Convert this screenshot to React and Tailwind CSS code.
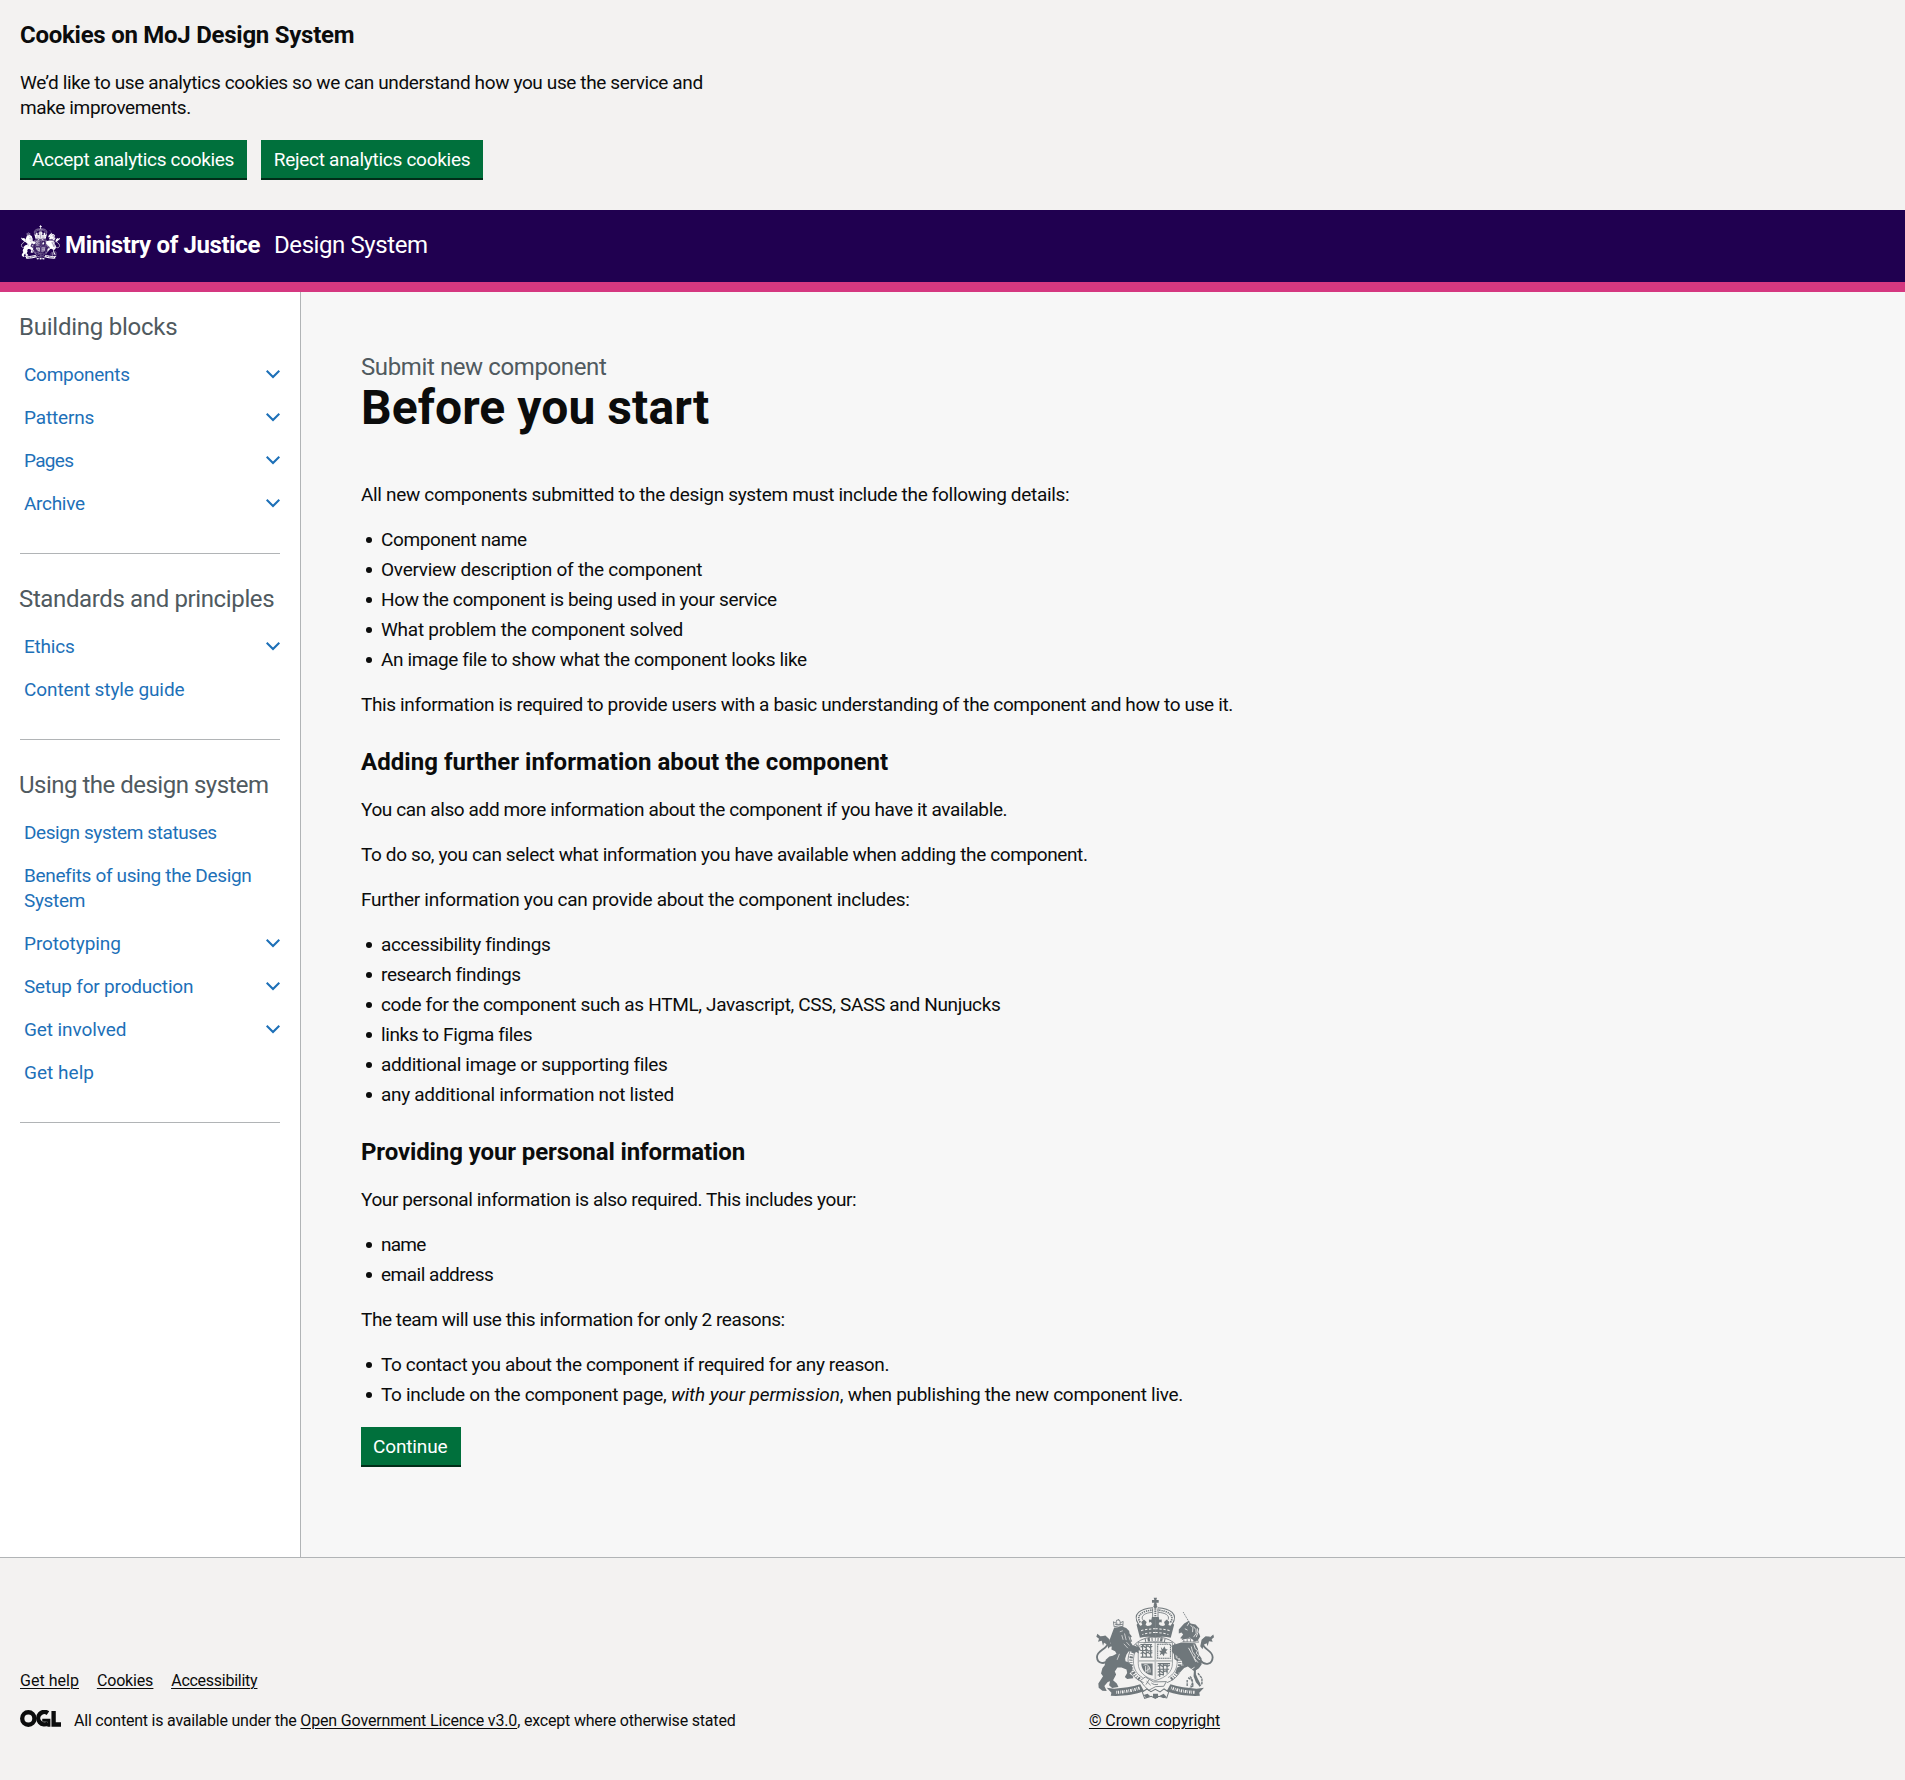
import React from "react";

const link = "text-[#1d70b8]";

const navGroups = [
  {
    title: "Building blocks",
    titleClass: "-ml-px tracking-[-0.24px]",
    items: [
      { label: "Components", open: true, cls: "tracking-[-0.261px]" },
      { label: "Patterns", open: true, cls: "tracking-[-0.165px]" },
      { label: "Pages", open: true, cls: "tracking-[-0.7px]" },
      { label: "Archive", open: true, cls: "tracking-[-0.3px]" },
    ],
  },
  {
    title: "Standards and principles",
    titleClass: "-ml-px tracking-[-0.37px]",
    items: [
      { label: "Ethics", open: true, cls: "tracking-[-0.209px]" },
      { label: "Content style guide", cls: "tracking-[-0.1px]" },
    ],
  },
  {
    title: "Using the design system",
    titleClass: "-ml-px tracking-[-0.5px]",
    items: [
      { label: "Design system statuses", cls: "tracking-[-0.416px]" },
      { label: "Benefits of using the Design System", cls: "tracking-[-0.34px]" },
      { label: "Prototyping", open: true, cls: "tracking-[-0.07px]" },
      { label: "Setup for production", open: true, cls: "tracking-[-0.19px]" },
      { label: "Get involved", open: true, cls: "tracking-[-0.1px]" },
      { label: "Get help", cls: "tracking-[0.03px]" },
    ],
  },
];

function Chevron() {
  return (
    <svg className="mt-[7.5px] h-[9px] w-3.5 shrink-0" viewBox="0 0 14 9" fill="none" stroke="#1d70b8" strokeWidth="2.1">
      <path d="M0.7 0.8 7 7 13.3 0.8" />
    </svg>
  );
}

/* Left half of the crown; the right half is its mirror image. */
function CrownHalf({ knock }) {
  return (
    <>
      <path d="M206 132C188 104 212 86 250 84" strokeWidth="3" />
      <path d="M212 128C198 108 218 93 250 91" strokeWidth="5" strokeDasharray="4 2.5" />
      <path d="M219 120C213 107 228 99 248 98" strokeWidth="2.5" />
      <path d="M249 86v32" strokeWidth="2.5" />
      <path
        d="M257.5 173Q232 168 211 174L201 135 206 130 212 138 218 136 215 127 223 119 231 127 228 136 234 139 242 137 247 133 244 127 238 128V119L245 120 247 112H257.5z"
        fill="currentColor"
        stroke="none"
      />
      <path d="M257 147q-22 0-44 6M257 158q-20 0-39 6" stroke={knock} strokeWidth="3" strokeDasharray="7 5" />
    </>
  );
}

/* Royal coat of arms, drawn in the current text colour. */
function Crest({ className, knock }) {
  return (
    <svg className={className} viewBox="80 52 352 308" fill="none" stroke="currentColor" preserveAspectRatio="none">
      {/* orb and cross */}
      <path d="M252 54h10l-2 7h7v8h-7l2 7h-10l2-7h-7v-8h7z" fill="currentColor" stroke="none" />
      <circle cx="257" cy="80" r="5.5" fill="currentColor" stroke="none" />
      <CrownHalf knock={knock} />
      <g transform="matrix(-1 0 0 1 514 0)">
        <CrownHalf knock={knock} />
      </g>
      <path d="M257 86v34" strokeWidth="6" strokeDasharray="4 2.5" />
      {/* garter */}
      <path d="M226 176c-35 11-54 42-50 75 3 28 20 47 46 57M288 176c35 11 54 42 50 75-3 28-20 47-46 57M226 176c20-6 42-6 62 0" strokeWidth="2.5" />
      <path d="M214 194c-18 14-24 35-22 57 2 19 11 33 27 42M300 194c18 14 24 35 22 57-2 19-11 33-27 42M222 190c22-6 48-6 70 0" strokeWidth="2" />
      <path d="M226 182q31-8 64 1" strokeWidth="10" strokeDasharray="3 5 7 5 3 7 2 6" />
      <path d="M203 196c-18 19-22 45-17 68 4 14 11 23 24 34M311 196c18 19 22 45 17 68-4 14-11 23-24 34" strokeWidth="10" strokeDasharray="3 5 2 4 6 4" />
      {/* shield */}
      <path d="M206 188h102v63c0 25-20 42-51 51-31-9-51-26-51-51z" strokeWidth="2" />
      <path d="M257 189v109M208 243h98" strokeWidth="5" opacity=".4" />
      <path d="M213 194h34M213 202l8-4 6 5 8-5 6 5 7-4M212 212h14l4-4 6 5h12M213 221l8-4 6 5 8-5 6 5 7-4M213 232h35M219 193v39M230 193v41M243 193v39" strokeWidth="3.6" />
      <path d="M264 193h38v42h-38z" strokeWidth="3" strokeDasharray="5 1.5" />
      <path d="M273 201l6 7 5-9 4 9 6 0-6 7 5 7-8-2-3 9-5-7-7 5 3-9-5-5h8z" fill="currentColor" stroke="none" />
      <path d="M215 251h34v36c-20-3-33-16-34-36z" fill="currentColor" stroke="none" />
      <path d="M222 256c12-6 21 4 19 22M228 258v16M235 259v20M241 264l-14 12" stroke={knock} strokeWidth="2.5" />
      <path d="M264 251h37M264 259l8-4 6 5 8-5 6 5 8-4M264 268h34M264 277l8-4 6 5 8-5 8 2M264 286l8-3 10 2M270 249v42M281 249v38M292 249v32" strokeWidth="3.6" />
      {/* garter buckle */}
      <path d="M212 302l15-11 25 15 38-1-8 14-24 1-21 11-13-13zM231 304l12 12M245 309c6 5 12 6 20 4M238 300l-9 14" strokeWidth="2.5" />
      {/* lion */}
      <path d="M134 141l-2-15 7 4 3-9h8l3 8 8-4-1 16q-13-5-26 0zM147 121v-3M137 134h23M142 128v8M152 128v8" strokeWidth="2.5" />
      <path
        d="M134 144l24-4 12 5 9 9 1 7 7 9-4 4 5 11-5 1 6 10 21 6 4 10-8 0 2 9-9-5-5 6-9-8-8 1-6 9-4 12 1 8 10 4 9 8 2 14-9 11 10 8 1 6-18 2-7-6 7-12-2-10-15-6-12 0-8 12 4 9-9 17 11 10 5 10-19 3-9-8 3-12-7 2-10 12 7 15-13-1-11-9-1-12 14-22-6-8 4-16 7-9 3-16 11-10 10-2 11-6-4-8-11-5 1-9-6 1-5-5 8-6-5-6z"
        fill="currentColor"
        stroke="none"
      />
      <path d="M151 156l9-3M157 166l4 14M165 161l5 20M171 187l9 10M163 192l12 13M178 170l4 12M150 222l-7 18" stroke={knock} strokeWidth="2" />
      <path d="M122 238c-16 18-38 13-39-6-1-21 30-22 32-42 0-12-9-18-22-17" strokeWidth="5.5" />
      <path d="M84 162l10 8 14-3 12 11 4 19-7 10-4-13-9-5-3 9-4-15-11 3 3-9-8-6z" fill="currentColor" stroke="none" />
      {/* unicorn */}
      <path d="M340 97l20 34" strokeWidth="2.5" strokeDasharray="4 2" />
      <path
        d="M327 149l16-18 14-8 5 8 15 3 11 12-2 11 5 13-6 10-10 6-7-7-8-6-17 5-12-3 9-11-5-6-8 3z"
        fill="currentColor"
        stroke="none"
      />
      <path d="M370 140l8 9 1 12-8 11M362 136l7 8-1 13M345 147l8 4M358 128l-6 10M382 146l2 12-5 14" stroke={knock} strokeWidth="2.5" />
      <path d="M336 180l8-4 26-1 16 9M338 186l49 1M342 180v6M352 178v8M362 178v8M372 179v8" strokeWidth="2.5" />
      <path
        d="M308 196l26-8 42 2 8 17 3 17 8 12 0 18-8 11-9 6 0 12 5 12 8 16-2 9-11-13-7-18 1-16-18-13-11 4-10 11-9 4-6-4 3-11 11-6 9-1-4-12-12-15-14-9-5-7z"
        fill="currentColor"
        stroke="none"
      />
      <path d="M332 208l-18 4 2 24 9 6M330 216l-6 3 2 14" strokeWidth="5" />
      <path d="M372 194l4 13 7 5-4 8 8 7-5 7 8 6M364 200l4 16 8 10-2 10 10 12M356 204l10 18 12 24M374 262l-12 8" stroke={knock} strokeWidth="2.5" />
      <path d="M384 280l12 15 0 16-8 8M355 293l11 8 4 16-10 7M360 290c10 8 10 22 2 30M352 300v20" strokeWidth="4" strokeDasharray="8 2" />
      <path d="M390 240c16 20 37 13 38-8 0-21-28-22-30-42 0-12 9-18 21-17" strokeWidth="5.5" />
      <path d="M430 164l-10 8-13-3-12 11-4 19 7 9 3-13 9-5 3 9 4-15 11 2-3-8 7-6z" fill="currentColor" stroke="none" />
      {/* ribbon and motto */}
      <path d="M112 323l22 3c27-2 54-5 78-13l11 20c-23 11-55 14-84 15l-15-1 2-9zM402 323l-22 3c-27-2-54-5-78-13l-11 20c23 11 55 14 84 15l15-1-2-9z" fill="currentColor" stroke="none" />
      <path d="M140 337c24-1 48-5 70-13M304 324c22 8 46 12 70 13" stroke={knock} strokeWidth="9" strokeDasharray="2 3 4 3 2 3 5 3" />
      <path d="M218 336l14-9 12 8 13-7 14 8 12-9 14 9-6 18-24-5-10 6-12-6-20 6z" strokeWidth="3" />
      <path d="M222 345l12-4 8 8-12 5zM250 341h15v13h-15zM270 347l12-6 8 9-9 5z" fill="currentColor" stroke="none" />
    </svg>
  );
}

function OglLogo() {
  return (
    <svg className="mt-[-1px] mr-[13px] h-[17px] w-[41px] shrink-0" viewBox="0 0 483 196" fill="none" stroke="#0b0c0c" strokeWidth="51" preserveAspectRatio="none">
      <circle cx="98" cy="98" r="72" />
      <path d="M329 36A72 72 0 1 0 329 152" />
      <path d="M262 118H340V192" strokeWidth="36" />
      <path d="M396 12V168H483" />
    </svg>
  );
}

function Button({ children, className }) {
  return (
    <button
      className={
        "h-[38px] bg-[#00703c] pb-[6px] pt-[7px] text-center text-[19px] leading-[25px] text-white shadow-[0_2px_0_#002d18] " + className
      }
    >
      {children}
    </button>
  );
}

function Para({ children, className }) {
  return <p className={"mb-5 " + className}>{children}</p>;
}

function Bullets({ items }) {
  return (
    <ul className="mb-5 flex flex-col gap-[5px]">
      {items.map(([content, cls], i) => (
        <li key={i} className="flex">
          <span className="ml-[4.5px] mr-[9px] mt-[9.5px] size-[6.5px] shrink-0 rounded-full bg-[#0b0c0c]" />
          <span className={cls}>{content}</span>
        </li>
      ))}
    </ul>
  );
}

function SubHeading({ children, className }) {
  return <h2 className={"mb-5 pt-[10px] text-[24px] font-bold leading-[30px] " + className}>{children}</h2>;
}

export default function App() {
  return (
    <div className="flex min-h-[1780px] flex-col bg-[#f3f2f1] font-['Roboto',sans-serif] text-[19px] leading-[25px] text-[#0b0c0c]">
      <section className="h-[210px] px-5 pt-5">
        <h2 className="mb-5 text-[24px] font-bold leading-[30px] tracking-[-0.26px]">Cookies on MoJ Design System</h2>
        <p className="mb-5 w-[700px] tracking-[-0.375px]">
          We’d like to use analytics cookies so we can understand how you use the service and
          <br />
          make improvements.
        </p>
        <div className="flex gap-[14px]">
          <Button className="w-[227px] pr-px tracking-[-0.325px]">Accept analytics cookies</Button>
          <Button className="w-[222px] tracking-[-0.274px]">Reject analytics cookies</Button>
        </div>
      </section>

      <header className="flex h-[82px] items-start border-b-[10px] border-[#d53880] bg-[#200050] pl-[21px] pt-[15px] text-[24px] leading-[30px] text-white">
        <Crest className="h-[35px] w-[39px]" knock="#200050" />
        <span className="ml-[5px] mt-[5px] w-[209px] whitespace-nowrap font-bold tracking-[-0.357px]">Ministry of Justice</span>
        <span className="mt-[5px] tracking-[-0.413px]">Design System</span>
      </header>

      <div className="flex h-[1265px]">
        <nav className="w-[301px] shrink-0 border-r border-[#b1b4b6] bg-white px-5 pt-5">
          {navGroups.map((group) => (
            <div key={group.title} className="mb-[30px] border-b border-[#b1b4b6] pb-[37px]">
              <h3 className={"mb-5 whitespace-nowrap text-[24px] leading-[30px] text-[#505a5f] " + group.titleClass}>{group.title}</h3>
              <ul className="flex flex-col gap-[18px] pl-1">
                {group.items.map((item) => (
                  <li key={item.label} className="flex items-start justify-between">
                    <a className={link + " " + item.cls}>{item.label}</a>
                    {item.open && <Chevron />}
                  </li>
                ))}
              </ul>
            </div>
          ))}
        </nav>

        <main className="flex-1 bg-[#f7f7f7] pl-[60px] pt-[60px]">
          <p className="text-[24px] leading-[30px] tracking-[-0.39px] text-[#505a5f]">Submit new component</p>
          <h1 className="mb-[49px] pt-px text-[48px] font-bold leading-[50px] tracking-[0.076px]">Before you start</h1>

          <Para className="tracking-[-0.32px]">All new components submitted to the design system must include the following details:</Para>
          <Bullets
            items={[
              ["Component name", "tracking-[-0.373px]"],
              ["Overview description of the component", "tracking-[-0.256px]"],
              ["How the component is being used in your service", "tracking-[-0.377px]"],
              ["What problem the component solved", "tracking-[-0.26px]"],
              ["An image file to show what the component looks like", "tracking-[-0.37px]"],
            ]}
          />
          <Para className="tracking-[-0.372px]">
            This information is required to provide users with a basic understanding of the component and how to use it.
          </Para>

          <SubHeading className="tracking-[0.05px]">Adding further information about the component</SubHeading>
          <Para className="tracking-[-0.385px]">You can also add more information about the component if you have it available.</Para>
          <Para className="tracking-[-0.38px]">To do so, you can select what information you have available when adding the component.</Para>
          <Para className="tracking-[-0.28px]">Further information you can provide about the component includes:</Para>
          <Bullets
            items={[
              ["accessibility findings", "tracking-[-0.34px]"],
              ["research findings", "tracking-[-0.37px]"],
              ["code for the component such as HTML, Javascript, CSS, SASS and Nunjucks", "tracking-[-0.334px]"],
              ["links to Figma files", "tracking-[-0.38px]"],
              ["additional image or supporting files", "tracking-[-0.35px]"],
              ["any additional information not listed", "tracking-[-0.3px]"],
            ]}
          />

          <SubHeading className="tracking-[-0.11px]">Providing your personal information</SubHeading>
          <Para className="tracking-[-0.39px]">Your personal information is also required. This includes your:</Para>
          <Bullets
            items={[
              ["name", "tracking-[-0.76px]"],
              ["email address", "tracking-[-0.495px]"],
            ]}
          />
          <Para className="tracking-[-0.431px]">The team will use this information for only 2 reasons:</Para>
          <Bullets
            items={[
              ["To contact you about the component if required for any reason.", "tracking-[-0.371px]"],
              [
                <>
                  To include on the component page, <em className="tracking-[-0.08px]">with your permission</em>, when publishing the
                  new component live.
                </>,
                "tracking-[-0.305px]",
              ],
            ]}
          />
          <Button className="w-[99.5px] pr-px tracking-[-0.143px]">Continue</Button>
        </main>
      </div>

      <footer className="flex flex-1 items-end border-t border-[#b1b4b6] pb-[49px] pl-5 text-[16px] leading-[20px]">
        <div className="w-[1069px]">
          <div className="mb-5 flex underline decoration-1 underline-offset-2">
            <a className="mr-[18px] tracking-[0.02px]">Get help</a>
            <a className="mr-[18px] tracking-[-0.158px]">Cookies</a>
            <a className="tracking-[-0.27px]">Accessibility</a>
          </div>
          <div className="flex items-start">
            <OglLogo />
            <p className="tracking-[-0.225px]">
              All content is available under the{" "}
              <a className="tracking-[-0.153px] underline decoration-1 underline-offset-2">Open Government Licence v3.0</a>
              <span className="tracking-[-0.19px]">, except where otherwise stated</span>
            </p>
          </div>
        </div>
        <div className="flex w-[131px] flex-col items-center">
          <Crest className="mb-[11px] h-[103px] w-[118px] text-[#6f777b]" knock="#f3f2f1" />
          <a className="whitespace-nowrap tracking-[-0.078px] underline decoration-1 underline-offset-2">© Crown copyright</a>
        </div>
      </footer>
    </div>
  );
}
